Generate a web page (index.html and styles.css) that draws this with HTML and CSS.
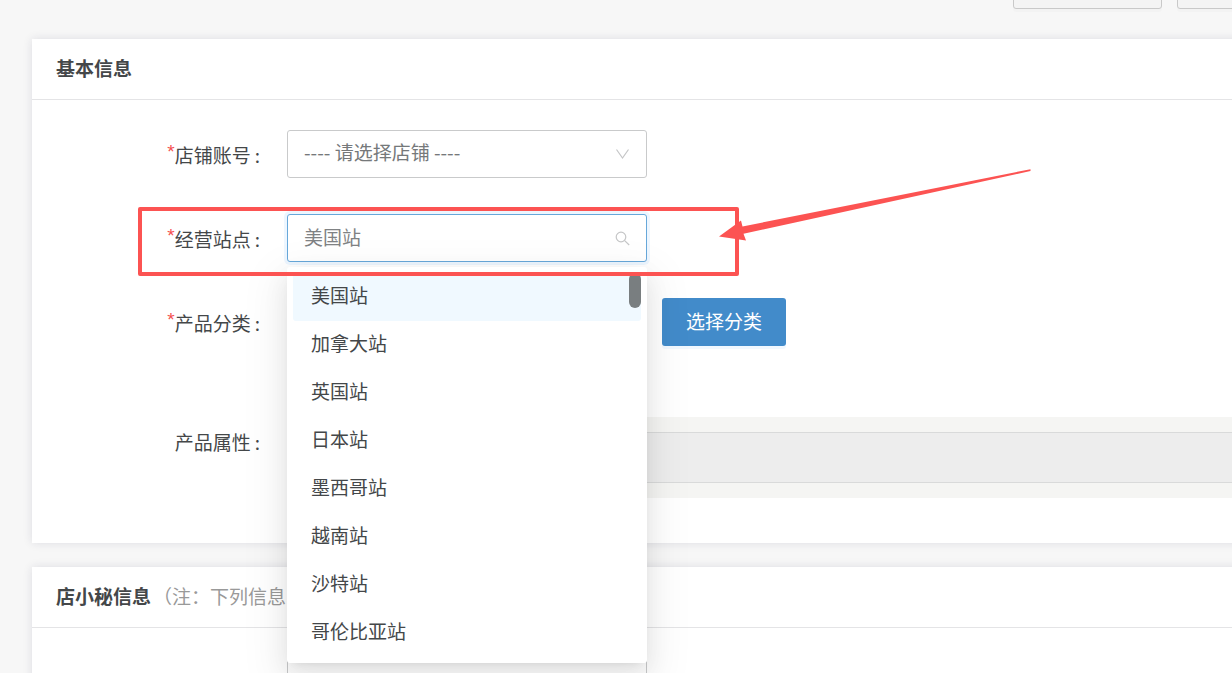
FILE: index.html
```html
<!DOCTYPE html>
<html lang="zh-CN">
<head>
<meta charset="utf-8">
<title>基本信息</title>
<link rel="stylesheet" href="styles.css">
</head>
<body>
<div class="toolbar">
  <button class="tool-button" type="button"></button>
  <button class="tool-button" type="button"></button>
</div>
<main class="page">
  <section class="card">
    <h2 class="card-header">基本信息</h2>
    <form class="card-body">
      <div class="row">
        <label class="label" for="shop"><span class="required">*</span>店铺账号<span class="colon">:</span></label>
        <div class="field">
          <select class="control" id="shop"><option>---- 请选择店铺 ----</option></select>
          <svg class="field-icon" viewBox="0 0 16 16"><path d="M1.5 3.5 7.5 12 13.5 3.5"/></svg>
        </div>
      </div>
      <div class="row">
        <label class="label" for="site"><span class="required">*</span>经营站点<span class="colon">:</span></label>
        <div class="field">
          <input class="control control-active" id="site" type="text" role="combobox" aria-expanded="true" aria-controls="site-list" placeholder="美国站">
          <svg class="field-icon" viewBox="0 0 16 16"><circle cx="6" cy="7" r="4.8"/><path d="M9.4 10.4 14.2 15"/></svg>
          <div class="dropdown">
            <ul class="options" id="site-list" role="listbox">
              <li class="option option-active" role="option" aria-selected="true">美国站</li>
              <li class="option" role="option">加拿大站</li>
              <li class="option" role="option">英国站</li>
              <li class="option" role="option">日本站</li>
              <li class="option" role="option">墨西哥站</li>
              <li class="option" role="option">越南站</li>
              <li class="option" role="option">沙特站</li>
              <li class="option" role="option">哥伦比亚站</li>
            </ul>
            <span class="scroll-thumb"></span>
          </div>
        </div>
        <span class="highlight"></span>
        <svg class="arrow" viewBox="0 0 314 74"><path d="M0 67.5 22 51.5 23.5 57.5 311.5 .2V2L24.5 64.8 27 71.5Z"/></svg>
      </div>
      <div class="row">
        <span class="label"><span class="required">*</span>产品分类<span class="colon">:</span></span>
        <div class="field"></div>
        <button class="primary-button" type="button">选择分类</button>
      </div>
      <div class="row row-attributes">
        <span class="label">产品属性<span class="colon">:</span></span>
        <div class="attributes"><div class="attributes-bar"></div></div>
      </div>
    </form>
  </section>
  <section class="card">
    <h2 class="card-header">店小秘信息<span class="note">（注：下列信息</span></h2>
    <div class="card-body">
      <div class="row">
        <span class="label"></span>
        <div class="field"><div class="control"></div></div>
      </div>
    </div>
  </section>
</main>
</body>
</html>
```
FILE: styles.css
```css
* {
  box-sizing: border-box;
}

body {
  margin: 0;
  overflow: hidden;
  background: #f7f7f7;
  color: #444749;
  font: 19px/30px "Noto Sans CJK SC", sans-serif;
}

button,
input,
select {
  font: inherit;
}

.toolbar {
  display: flex;
  align-items: flex-end;
  justify-content: flex-end;
  gap: 15px;
  height: 9px;
  margin-right: -94px;
}

.tool-button {
  flex: none;
  width: 149px;
  height: 48px;
  border: 1px solid #c9c9c9;
  border-radius: 3px;
  background: #f4f4f4;
  box-shadow: 0 3px 0 rgba(0, 0, 0, 0.015);
}

.page {
  display: flex;
  flex-direction: column;
  gap: 24px;
  margin-right: -12px;
  padding: 30px 0 0 32px;
}

.card {
  background: #fff;
  box-shadow: 0 0 9px rgba(30, 30, 70, 0.12);
}

.card-header {
  margin: 0;
  padding: 14px 24px 16px;
  border-bottom: 1px solid #e4e4e6;
  font-size: inherit;
  font-weight: 700;
}

.note {
  margin-left: 2px;
  color: #999;
  font-weight: 400;
}

.card-body {
  display: flex;
  flex-direction: column;
  gap: 36px;
  padding: 30px 0 45px;
}

.row {
  position: relative;
  display: flex;
  min-height: 48px;
}

.label {
  display: flex;
  flex: none;
  justify-content: flex-end;
  width: 228px;
  margin-right: 27px;
  padding-top: 10px;
}

.required {
  color: #f5504f;
  font-family: "Liberation Sans", sans-serif;
  line-height: 24px;
}

.colon {
  margin-left: 4px;
}

.field {
  position: relative;
  flex: none;
  width: 360px;
}

.control {
  display: block;
  width: 100%;
  height: 48px;
  padding: 0 48px 4px 16px;
  border: 1px solid #c9cacb;
  border-radius: 3px;
  outline: 0;
  appearance: none;
  background: #fff;
  color: #75787a;
}

.control::placeholder {
  color: #808284;
  opacity: 1;
}

.control-active {
  border-color: #67a8da;
  box-shadow: 0 0 0 3px rgba(24, 144, 255, 0.08);
}

.field-icon {
  position: absolute;
  top: 16px;
  right: 16px;
  width: 16px;
  height: 16px;
  fill: none;
  stroke: #c5c6c7;
  stroke-width: 1.2;
  pointer-events: none;
}

.dropdown {
  position: absolute;
  z-index: 2;
  top: 53px;
  left: 0;
  width: 100%;
  padding: 6px;
  border-radius: 3px;
  background: #fff;
  box-shadow:
    0 4px 9px -6px rgba(0, 0, 0, 0.12),
    0 9px 24px rgba(0, 0, 0, 0.08),
    0 14px 42px 12px rgba(0, 0, 0, 0.05);
}

.options {
  margin: 0;
  padding: 0;
  list-style: none;
}

.option {
  padding: 7px 18px 11px;
  border-radius: 3px;
}

.option-active {
  background: #f0f9ff;
}

.scroll-thumb {
  position: absolute;
  top: 6px;
  right: 6px;
  width: 12px;
  height: 35px;
  border-radius: 6px;
  background: #797e80;
}

.highlight {
  position: absolute;
  z-index: 3;
  top: -7px;
  left: 106px;
  width: 601px;
  height: 69px;
  border: 4px solid #fc5352;
  border-radius: 2px;
  pointer-events: none;
}

.arrow {
  position: absolute;
  z-index: 3;
  top: -45px;
  left: 687px;
  width: 314px;
  height: 74px;
  fill: #fc5352;
  pointer-events: none;
}

.primary-button {
  height: 48px;
  margin-left: 15px;
  padding: 0 24px 2px;
  border: 0;
  border-radius: 3px;
  background: #428bca;
  box-shadow: 0 3px 0 rgba(24, 144, 255, 0.06);
  color: #fff;
}

.row-attributes {
  margin-top: 35px;
}

.attributes {
  flex: 1;
  padding: 15px 0;
  background: #f5f5f3;
}

.attributes-bar {
  height: 51px;
  border: 1px solid #d9dada;
  border-right: 0;
  background: #ededed;
}
```
